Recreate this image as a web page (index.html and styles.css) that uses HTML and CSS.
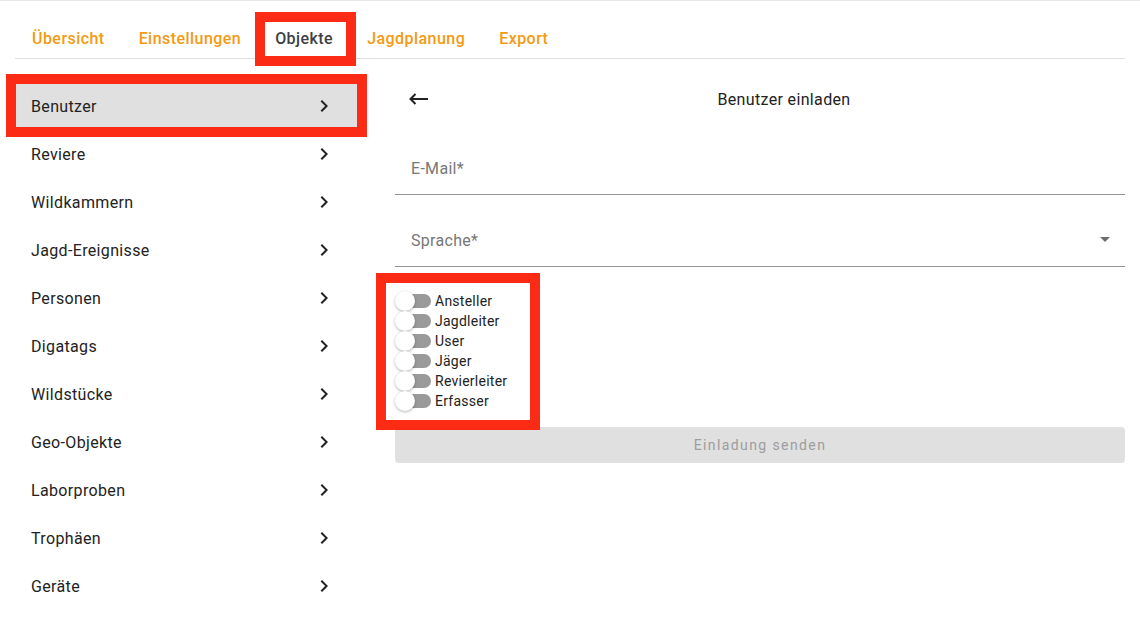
FILE: index.html
```html
<!DOCTYPE html>
<html lang="de">
<head>
  <meta charset="UTF-8" />
  <meta name="viewport" content="width=device-width, initial-scale=1.0"/>
  <title>Objekte – Benutzer einladen</title>
  <link rel="stylesheet" href="styles.css">
</head>
<body>

  <!-- Hauptnavigation -->
  <nav class="tabs">
    <a class="tab">Übersicht</a>
    <a class="tab">Einstellungen</a>
    <a class="tab active">Objekte</a>
    <a class="tab">Jagdplanung</a>
    <a class="tab">Export</a>
  </nav>

  <div class="main">
    <!-- Objektliste -->
    <ul class="sidebar">
      <li class="item active">Benutzer<svg class="chev" viewBox="0 0 24 24"><path d="M10 6 8.59 7.41 13.17 12l-4.58 4.59L10 18l6-6z"/></svg></li>
      <li class="item">Reviere<svg class="chev" viewBox="0 0 24 24"><path d="M10 6 8.59 7.41 13.17 12l-4.58 4.59L10 18l6-6z"/></svg></li>
      <li class="item">Wildkammern<svg class="chev" viewBox="0 0 24 24"><path d="M10 6 8.59 7.41 13.17 12l-4.58 4.59L10 18l6-6z"/></svg></li>
      <li class="item">Jagd-Ereignisse<svg class="chev" viewBox="0 0 24 24"><path d="M10 6 8.59 7.41 13.17 12l-4.58 4.59L10 18l6-6z"/></svg></li>
      <li class="item">Personen<svg class="chev" viewBox="0 0 24 24"><path d="M10 6 8.59 7.41 13.17 12l-4.58 4.59L10 18l6-6z"/></svg></li>
      <li class="item">Digatags<svg class="chev" viewBox="0 0 24 24"><path d="M10 6 8.59 7.41 13.17 12l-4.58 4.59L10 18l6-6z"/></svg></li>
      <li class="item">Wildstücke<svg class="chev" viewBox="0 0 24 24"><path d="M10 6 8.59 7.41 13.17 12l-4.58 4.59L10 18l6-6z"/></svg></li>
      <li class="item">Geo-Objekte<svg class="chev" viewBox="0 0 24 24"><path d="M10 6 8.59 7.41 13.17 12l-4.58 4.59L10 18l6-6z"/></svg></li>
      <li class="item">Laborproben<svg class="chev" viewBox="0 0 24 24"><path d="M10 6 8.59 7.41 13.17 12l-4.58 4.59L10 18l6-6z"/></svg></li>
      <li class="item">Trophäen<svg class="chev" viewBox="0 0 24 24"><path d="M10 6 8.59 7.41 13.17 12l-4.58 4.59L10 18l6-6z"/></svg></li>
      <li class="item">Geräte<svg class="chev" viewBox="0 0 24 24"><path d="M10 6 8.59 7.41 13.17 12l-4.58 4.59L10 18l6-6z"/></svg></li>
    </ul>

    <!-- Formular -->
    <section class="panel">
      <div class="header">
        <button class="back">
          <svg viewBox="0 0 20 12"><path d="M19 6H1.5M6.5 1 1.5 6l5 5" fill="none" stroke="#222" stroke-width="2"/></svg>
        </button>
        <h1 class="title">Benutzer einladen</h1>
      </div>

      <div class="field">
        <span class="label">E-Mail*</span>
      </div>

      <div class="field">
        <span class="label">Sprache*</span>
        <svg class="drop" viewBox="0 0 24 24"><path d="M7 10l5 5 5-5z"/></svg>
      </div>

      <div class="roles">
        <label class="role"><span class="switch"></span>Ansteller</label>
        <label class="role"><span class="switch"></span>Jagdleiter</label>
        <label class="role"><span class="switch"></span>User</label>
        <label class="role"><span class="switch"></span>Jäger</label>
        <label class="role"><span class="switch"></span>Revierleiter</label>
        <label class="role"><span class="switch"></span>Erfasser</label>
      </div>

      <button class="send" disabled>Einladung senden</button>
    </section>
  </div>

</body>
</html>
```

FILE: styles.css
```css
* {
  box-sizing: border-box;
  margin: 0;
  padding: 0;
}

html, body {
  height: 100%;
  background: #fff;
  overflow: hidden;
  font-family: Roboto, "Liberation Sans", sans-serif;
  color: #222;
}

body {
  border-top: 1px solid #e8e8e8;
}

/* Tabs */
.tabs {
  display: flex;
  margin: 0 15px;
  padding-top: 17px;
  border-bottom: 1px solid #dedede;
}

.tab {
  position: relative;
  height: 40px;
  line-height: 42px;
  padding: 0 17px;
  font-size: 16px;
  font-weight: 500;
  letter-spacing: 0.45px;
  color: #f39a12;
  cursor: pointer;
}

.tab.active {
  color: #3d4045;
}

.tab.active::after {
  content: "";
  position: absolute;
  left: -3px;
  right: -6px;
  top: -6px;
  bottom: -8px;
  border: 10px solid #fb2b15;
}

.main {
  display: flex;
}

/* Liste */
.sidebar {
  list-style: none;
  width: 359px;
  padding-top: 23px;
}

.item {
  position: relative;
  display: flex;
  align-items: center;
  justify-content: space-between;
  height: 48px;
  margin-left: 14px;
  padding: 0 23px 0 17px;
  font-size: 16px;
  letter-spacing: 0.35px;
  color: #222;
}

.item.active {
  background: #e0e0e0;
}

.item.active::after {
  content: "";
  position: absolute;
  left: -8px;
  right: -8px;
  top: -8px;
  bottom: -7px;
  border: 10px solid #fb2b15;
}

.chev {
  width: 24px;
  height: 24px;
  fill: #222;
}

/* Formular */
.panel {
  width: 730px;
  margin-left: 36px;
  padding-top: 16px;
}

.header {
  display: flex;
  align-items: center;
  height: 48px;
}

.back {
  width: 48px;
  height: 48px;
  background: none;
  border: none;
  display: flex;
  align-items: center;
  padding-left: 14px;
}

.back svg {
  width: 20px;
  height: 12px;
}

.title {
  flex: 1;
  text-align: center;
  font-size: 16px;
  font-weight: 400;
  letter-spacing: 0.35px;
}

.field {
  position: relative;
  height: 56px;
  margin-top: 16px;
  padding: 20px 16px 0;
  border-bottom: 1px solid #949494;
}

.label {
  font-size: 16px;
  line-height: 18px;
  letter-spacing: 0.3px;
  color: #777;
}

.drop {
  position: absolute;
  right: 8px;
  top: 16px;
  width: 24px;
  height: 24px;
  fill: #6e6e6e;
}

.roles {
  position: relative;
  width: 126px;
  margin-top: 24px;
}

.roles::after {
  content: "";
  position: absolute;
  left: -19px;
  right: -19px;
  top: -18px;
  bottom: -19px;
  border: 10px solid #fb2b15;
}

.role {
  display: flex;
  align-items: center;
  height: 20px;
  font-size: 14px;
  letter-spacing: 0.25px;
  color: #222;
}

.switch {
  position: relative;
  width: 36px;
  height: 20px;
  margin-right: 4px;
}

.switch::before {
  content: "";
  position: absolute;
  left: 9px;
  right: 0;
  top: 3px;
  height: 14px;
  border-radius: 7px;
  background: #9a9a9a;
}

.switch::after {
  content: "";
  position: absolute;
  left: 0;
  top: 0;
  width: 20px;
  height: 20px;
  border-radius: 50%;
  background: #fff;
  box-shadow: 0 1px 3px rgba(0, 0, 0, 0.3);
}

.send {
  display: block;
  width: 100%;
  height: 36px;
  margin-top: 16px;
  border: none;
  border-radius: 4px;
  background: #e0e0e0;
  font-family: Roboto, "Liberation Sans", sans-serif;
  font-size: 14px;
  font-weight: 400;
  letter-spacing: 1.4px;
  color: #9d9d9d;
}
```
